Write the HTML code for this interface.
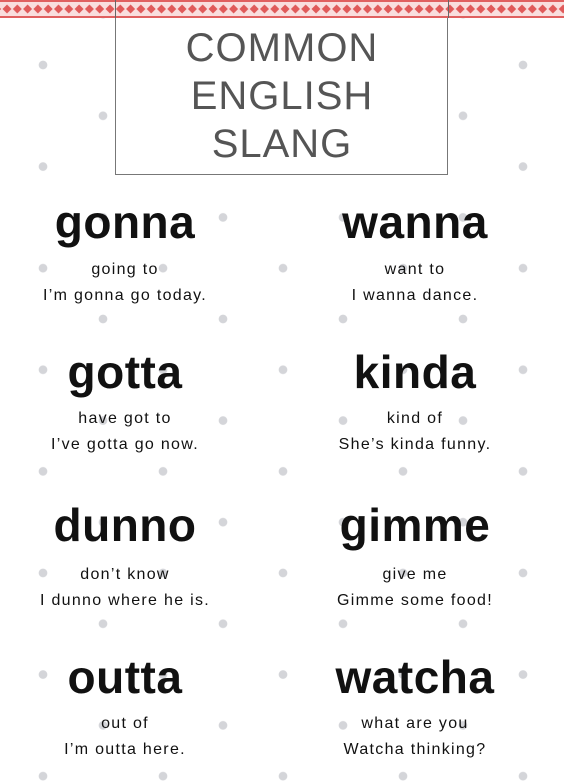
<!DOCTYPE html>
<html><head><style>
html,body{margin:0;padding:0}
body{width:564px;height:784px;position:relative;overflow:hidden;background:#fff;
background-image:radial-gradient(circle,#d4d5d9 4px,transparent 4.6px),radial-gradient(circle,#d4d5d9 4px,transparent 4.6px);
background-size:120px 101.6px,120px 101.6px;
background-position:-17px 14.2px,43px 65px;
font-family:"Liberation Sans",sans-serif;color:#111}
.band{position:absolute;left:0;top:0;width:564px;height:18px;border-top:2px solid #e06060;border-bottom:2px solid #e06060;box-sizing:border-box;}
.band svg{position:absolute;left:0;top:0}
.box{position:absolute;left:115px;top:-2px;width:333px;height:177px;border:1px solid #777;background:#fff;box-sizing:border-box}
.title{position:absolute;left:115px;width:334px;top:24px;text-align:center;font-size:40px;line-height:48px;color:#555;letter-spacing:1px}
.w{position:absolute;width:260px;text-align:center;font-size:46px;font-weight:bold;letter-spacing:0.5px;line-height:50px}
.s{position:absolute;width:260px;text-align:center;font-size:16px;letter-spacing:1.3px;line-height:26px;color:#111}
</style></head><body>
<div class="box"></div>
<div class="band"><svg width="564" height="14">
<defs><pattern id="p" width="10.3" height="14" patternUnits="userSpaceOnUse" x="2"><path d="M5 2.5 L9.5 7 L5 11.5 L0.5 7Z" fill="#e05a5a"/></pattern></defs>
<rect width="564" height="14" fill="#f9dede"/><rect width="564" height="14" fill="url(#p)"/></svg></div>
<div style="position:absolute;left:115px;top:0;width:1px;height:18px;background:#666"></div>
<div style="position:absolute;left:448px;top:0;width:1px;height:18px;background:#666"></div>
<div class="title">COMMON<br>ENGLISH<br>SLANG</div>

<div class="w" style="left:-5px;top:197px">gonna</div>
<div class="s" style="left:-5px;top:257px">going to<br>I’m gonna go today.</div>
<div class="w" style="left:285px;top:197px">wanna</div>
<div class="s" style="left:285px;top:257px">want to<br>I wanna dance.</div>

<div class="w" style="left:-5px;top:347px">gotta</div>
<div class="s" style="left:-5px;top:406px">have got to<br>I’ve gotta go now.</div>
<div class="w" style="left:285px;top:347px">kinda</div>
<div class="s" style="left:285px;top:406px">kind of<br>She’s kinda funny.</div>

<div class="w" style="left:-5px;top:500px">dunno</div>
<div class="s" style="left:-5px;top:562px">don’t know<br>I dunno where he is.</div>
<div class="w" style="left:285px;top:500px">gimme</div>
<div class="s" style="left:285px;top:562px">give me<br>Gimme some food!</div>

<div class="w" style="left:-5px;top:652px">outta</div>
<div class="s" style="left:-5px;top:711px">out of<br>I’m outta here.</div>
<div class="w" style="left:285px;top:652px">watcha</div>
<div class="s" style="left:285px;top:711px">what are you<br>Watcha thinking?</div>
</body></html>
